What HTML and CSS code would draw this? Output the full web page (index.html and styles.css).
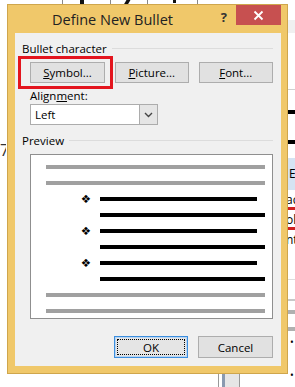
FILE: index.html
```html
<!DOCTYPE html>
<html lang="en">
<head>
    <meta charset="UTF-8">
    <title>Define New Bullet</title>
    <link rel="stylesheet" href="styles.css">
</head>
<body>
    <div class="doc">
        <div class="ruler">
            <span class="tick t1"></span>
            <span class="mark m1"></span>
            <span class="tick t2"></span>
            <span class="mark m2"></span>
            <span class="tick t3"></span>
            <span class="mark m3"></span>
            <span class="tick t4"></span>
        </div>
        <span class="digit">7</span>
        <div class="side">
            <div class="side-band"></div>
            <div class="side-rule"></div>
            <div class="side-black"></div>
            <div class="side-black second"></div>
            <div class="side-blue">E</div>
            <div class="side-text">ac</div>
            <div class="side-red"></div>
            <div class="side-text">ol.</div>
            <div class="side-red"></div>
            <div class="side-text">nt</div>
            <div class="side-gray"></div>
            <div class="side-gray mid"></div>
            <div class="side-gray thick"></div>
            <div class="side-gray thick"></div>
            <div class="side-dot">•</div>
            <div class="side-dot">•</div>
        </div>
        <div class="scroll-thumb"></div>
    </div>

    <div class="dialog">
        <div class="titlebar">
            <span class="title">Define New Bullet</span>
            <span class="help">?</span>
            <button class="close">
                <svg width="11" height="11" viewBox="0 0 11 11">
                    <path d="M1.5 1.5 L9.5 9.5 M9.5 1.5 L1.5 9.5" stroke="#fff" stroke-width="1.8" fill="none"/>
                </svg>
            </button>
        </div>
        <div class="content">
            <div class="group-label"><span>Bullet character</span></div>
            <div class="btn-row">
                <span class="marked">
                    <button class="btn"><u>S</u>ymbol...</button>
                    <span class="highlight"></span>
                </span>
                <button class="btn"><u>P</u>icture...</button>
                <button class="btn"><u>F</u>ont...</button>
            </div>
            <div class="field-label">Align<u>m</u>ent:</div>
            <div class="select">
                <span class="select-value">Left</span>
                <span class="select-arrow">
                    <svg width="9" height="6" viewBox="0 0 9 6">
                        <polyline points="1,1 4.5,4.5 8,1" stroke="#444" stroke-width="1.4" fill="none"/>
                    </svg>
                </span>
            </div>
            <div class="group-label preview-label"><span>Preview</span></div>
            <div class="preview">
                <div class="bar gray"></div>
                <div class="bar gray"></div>
                <div class="item"><span class="bullet">❖</span><div class="bar black short"></div></div>
                <div class="bar black follow"></div>
                <div class="item"><span class="bullet">❖</span><div class="bar black short"></div></div>
                <div class="bar black follow"></div>
                <div class="item"><span class="bullet">❖</span><div class="bar black short"></div></div>
                <div class="bar black follow"></div>
                <div class="bar gray"></div>
                <div class="bar gray"></div>
            </div>
            <div class="footer">
                <button class="btn default"><span class="focus">OK</span></button>
                <button class="btn">Cancel</button>
            </div>
        </div>
    </div>
</body>
</html>
```

FILE: styles.css
```css
body {
    margin: 0;
    width: 295px;
    height: 387px;
    overflow: hidden;
    position: relative;
    background: #fff;
    font-family: "Open Sans", "Noto Sans", Arial, sans-serif;
    font-size: 11.5px;
    color: #000;
}

/* document behind the dialog */
.doc {
    position: absolute;
    inset: 0;
}
.ruler {
    position: relative;
    height: 6px;
}
.tick {
    position: absolute;
    top: 0;
    width: 1px;
    height: 6px;
    background: #888;
}
.t1 { left: 62px; }
.t2 { left: 110px; }
.t3 { left: 147px; }
.t4 { left: 197px; }
.mark {
    position: absolute;
    top: 0;
    width: 4px;
    height: 5px;
    background: #111;
}
.m1 { left: 80px; }
.m2 { left: 125px; transform: skewX(-30deg); }
.m3 { left: 173px; width: 3px; height: 3px; }
.digit {
    position: absolute;
    left: 0;
    top: 139px;
    width: 6px;
    overflow: hidden;
    font-size: 16px;
    color: #333;
}
.side {
    position: absolute;
    left: 288px;
    top: 0;
    width: 7px;
    height: 387px;
    display: flex;
    flex-direction: column;
    overflow: hidden;
    font-size: 12px;
}
.side-band {
    margin-top: 20px;
    height: 13px;
    background: #f0f0f0;
}
.side-rule {
    margin-top: 56px;
    height: 1px;
    background: #d0d0d0;
}
.side-black {
    margin-top: 20px;
    height: 4px;
    background: #000;
}
.side-black.second {
    margin-top: 26px;
}
.side-blue {
    margin-top: 14px;
    height: 32px;
    line-height: 32px;
    background: #d5e3f3;
    padding-left: 1px;
}
.side-text {
    height: 15px;
    line-height: 15px;
    margin-top: 2px;
    margin-left: -2px;
}
.side-red {
    height: 3px;
    background: #d02020;
}
.side-gray {
    margin-top: 32px;
    height: 1px;
    background: #ddd;
}
.side-gray.mid {
    margin-top: 19px;
    height: 2px;
    background: #c8c8c8;
}
.side-gray.thick {
    margin-top: 9px;
    height: 4px;
    background: #b0b0b0;
}
.side-gray.thick + .side-gray.thick {
    margin-top: 13px;
}
.side-dot {
    margin-top: 1px;
    height: 20px;
    line-height: 20px;
    font-size: 10px;
    margin-left: 2px;
}
.side-dot + .side-dot {
    margin-top: 13px;
}
.scroll-thumb {
    position: absolute;
    left: 218px;
    top: 374px;
    width: 22px;
    height: 13px;
    border-left: 1px solid #999;
    border-right: 1px solid #999;
    box-sizing: border-box;
    background: linear-gradient(90deg, #fff 0, #fff 3px, #8a9ab0 3px, #8a9ab0 6px, #e6e6e6 6px);
}

/* dialog */
.dialog {
    position: absolute;
    left: 7px;
    top: 4px;
    width: 281px;
    box-sizing: border-box;
    border: 1px solid #cfa64c;
    background: #f0c86a;
    padding: 0 6px 7px 7px;
}
.titlebar {
    height: 28px;
    display: flex;
    align-items: flex-start;
}
.title {
    margin-left: 37px;
    margin-top: 5px;
    font-size: 14.5px;
    line-height: 20px;
    color: #222;
    flex: 1;
}
.help {
    margin-top: 3px;
    margin-right: 9px;
    font-size: 13px;
    font-weight: bold;
    color: #333;
}
.close {
    width: 45px;
    height: 20px;
    border: none;
    padding: 0;
    background: #c75050;
    display: flex;
    align-items: center;
    justify-content: center;
}
.content {
    background: #f0f0f0;
    height: 333px;
    box-sizing: border-box;
    padding: 8px 8px 8px 0;
    display: flex;
    flex-direction: column;
}
.group-label {
    display: flex;
    align-items: center;
    gap: 5px;
    height: 16px;
    line-height: 16px;
    padding-left: 7px;
}
.group-label::after {
    content: "";
    flex: 1;
    height: 1px;
    background: #dcdcdc;
    margin-top: -2px;
}
.btn-row {
    display: flex;
    gap: 10px;
    margin-top: 5px;
    padding-left: 15px;
}
.btn {
    width: 75px;
    height: 21px;
    box-sizing: border-box;
    border: 1px solid #adadad;
    background: #e1e1e1;
    font-family: inherit;
    font-size: 11.5px;
    color: #000;
    padding: 0;
    display: flex;
    align-items: center;
    justify-content: center;
}
.btn-row .btn:nth-child(2) {
    width: 74px;
}
.marked {
    position: relative;
    display: flex;
}
.highlight {
    position: absolute;
    left: -12px;
    right: -8px;
    top: -6px;
    bottom: -6px;
    border: 3px solid #e3151e;
}
.field-label {
    margin-top: 5px;
    padding-left: 15px;
    height: 15px;
    line-height: 15px;
}
.select {
    margin-top: 1px;
    margin-left: 15px;
    width: 128px;
    height: 21px;
    box-sizing: border-box;
    border: 1px solid #acacac;
    background: #fff;
    display: flex;
}
.select-value {
    flex: 1;
    padding-left: 4px;
    line-height: 19px;
}
.select-arrow {
    width: 17px;
    background: #e5e5e5;
    border-left: 1px solid #acacac;
    display: flex;
    align-items: center;
    justify-content: center;
}
.preview-label {
    margin-top: 8px;
}
.preview {
    margin-top: 5px;
    margin-left: 15px;
    width: 243px;
    box-sizing: border-box;
    border: 1px solid #8f8f8f;
    background: #fff;
    padding: 10px 0 5px 15px;
    display: flex;
    flex-direction: column;
    gap: 12px;
}
.bar {
    height: 4px;
}
.bar.gray {
    width: 219px;
    background: #a0a0a0;
}
.bar.black {
    background: #000;
}
.bar.follow {
    margin-left: 54px;
    width: 165px;
}
.item {
    display: flex;
    align-items: center;
    height: 4px;
}
.bullet {
    width: 54px;
    padding-right: 9px;
    box-sizing: border-box;
    text-align: right;
    font-family: "DejaVu Sans", sans-serif;
    font-size: 11.5px;
    line-height: 12px;
}
.bar.short {
    width: 157px;
}
.footer {
    margin-top: 17px;
    padding-left: 99px;
    display: flex;
    gap: 10px;
}
.footer .btn {
    height: 22px;
}
.footer .btn:first-child {
    width: 74px;
}
.btn.default {
    border: 1px solid #3c8ede;
    box-shadow: inset 0 0 0 1px #b9d5f2;
    background: #e5e5e5;
    padding: 3px;
}
.focus {
    flex: 1;
    align-self: stretch;
    display: flex;
    align-items: center;
    justify-content: center;
    outline: 1px dotted #000;
}
```
